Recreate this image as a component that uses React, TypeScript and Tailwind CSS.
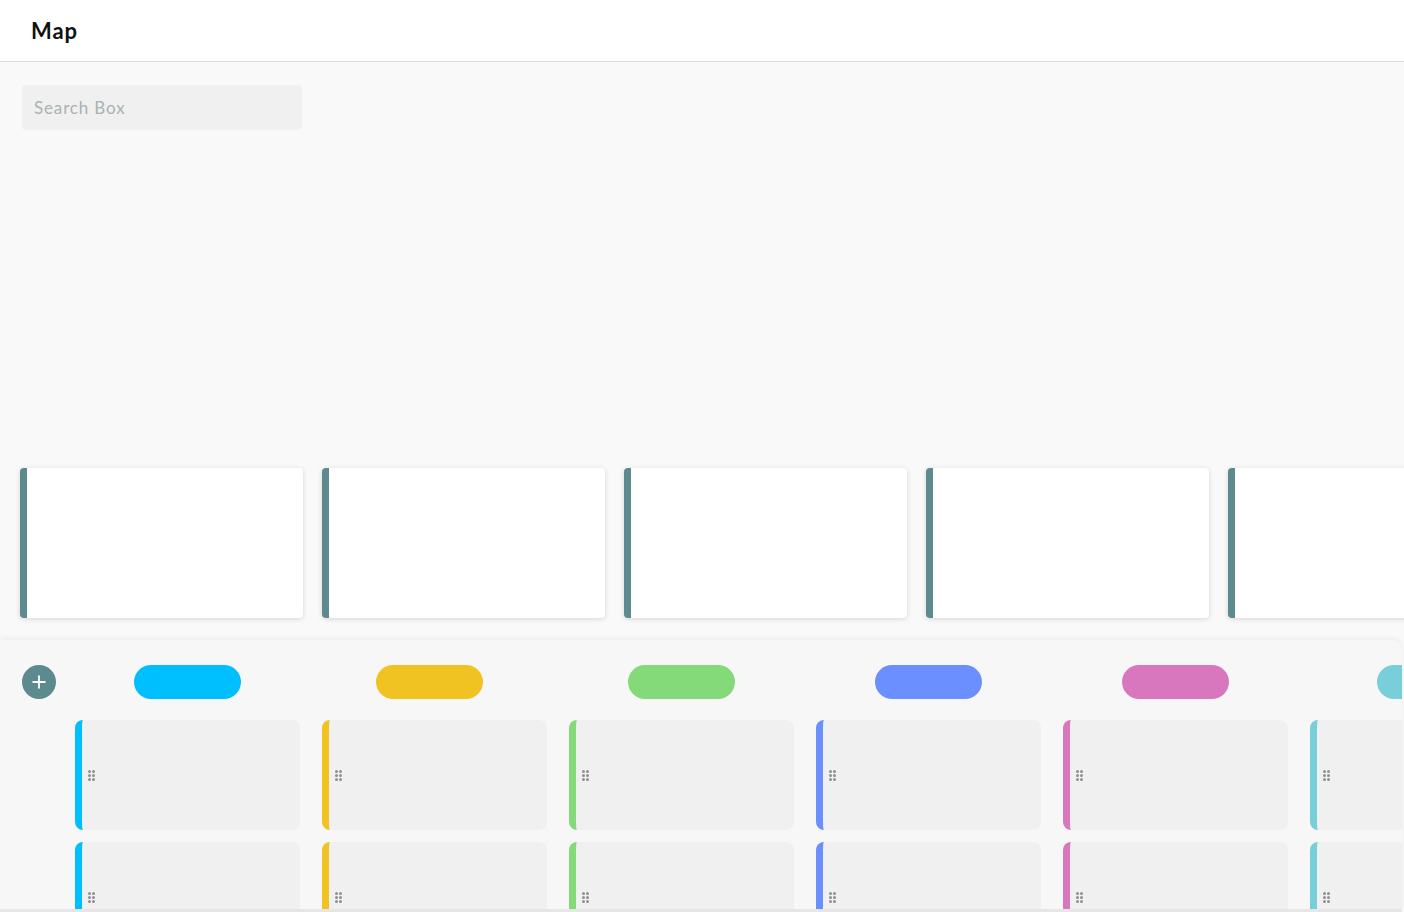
import { Plus } from 'lucide-react';

const lanes = [
  { color: 'border-[#00bfff]', pill: 'bg-[#00bfff] ml-[59px]' },
  { color: 'border-[#f0c322]', pill: 'bg-[#f0c322] ml-[54px]' },
  { color: 'border-[#84d978]', pill: 'bg-[#84d978] ml-[59px]' },
  { color: 'border-[#6b8ffe]', pill: 'bg-[#6b8ffe] ml-[59px]' },
  { color: 'border-[#d977be]', pill: 'bg-[#d977be] ml-[59px]' },
  { color: 'border-[#78cfd9]', pill: 'bg-[#78cfd9] ml-[67px]' },
];

function DragDots() {
  return (
    <div className="grid grid-cols-2 gap-[1px]">
      {Array.from({ length: 6 }).map((_, i) => (
        <span key={i} className="w-[3px] h-[3px] rounded-full bg-[#8f8f8f]" />
      ))}
    </div>
  );
}

export default function App() {
  return (
    <div className="h-[912px] w-[1404px] overflow-hidden bg-[#f9f9f9] flex flex-col" style={{ fontFamily: 'Lato, "Noto Sans", sans-serif' }}>
      {/* Header */}
      <div className="h-[62px] shrink-0 bg-white border-b border-[#dcdcdc] flex items-center px-[31px]">
        <h1 className="text-[22px] font-bold text-[#111] tracking-[0.04em]">Map</h1>
      </div>

      {/* Search */}
      <div className="pl-[22px] pt-[23px]">
        <input
          placeholder="Search Box"
          className="w-[280px] h-[45px] rounded-[4px] bg-[#f0f0f0] px-3 text-[17px] tracking-[0.05em] text-[#555] placeholder:text-[#a9b3b1] focus:outline-none"
        />
      </div>

      {/* Top cards */}
      <div className="flex gap-[19px] pl-[20px] mt-[338px] shrink-0">
        {Array.from({ length: 5 }).map((_, i) => (
          <div key={i} className="w-[283px] h-[150px] shrink-0 bg-white rounded-[4px] border-l-[7px] border-[#5d8a8f] shadow-[0_1px_5px_rgba(0,0,0,0.15)]" />
        ))}
      </div>

      {/* Lanes panel */}
      <div className="mt-[22px] w-[1402px] flex-1 bg-[#f7f7f7] rounded-tr-[10px] shadow-[0_-2px_6px_rgba(0,0,0,0.05)] flex pl-[22px] overflow-hidden border-b-[3px] border-[#e6e6e6]">
        <div className="w-[53px] shrink-0 pt-[25px]">
          <button className="w-[34px] h-[34px] rounded-full bg-[#5d8a8f] flex items-center justify-center text-white">
            <Plus className="w-[20px] h-[20px]" strokeWidth={2.2} />
          </button>
        </div>
        <div className="flex gap-[22px]">
          {lanes.map((lane, i) => (
            <div key={i} className="w-[225px] shrink-0 pt-[25px]">
              <div className="h-[34px] flex">
                <div className={`w-[107px] h-[34px] rounded-full shrink-0 ${lane.pill}`} />
              </div>
              <div className="mt-[21px] flex flex-col gap-[12px]">
                {[0, 1].map((j) => (
                  <div key={j} className={`h-[110px] rounded-[8px] bg-[#f0f0f0] border-l-[7px] ${lane.color} flex items-center pl-[6px]`}>
                    <DragDots />
                  </div>
                ))}
              </div>
            </div>
          ))}
        </div>
      </div>
    </div>
  );
}
